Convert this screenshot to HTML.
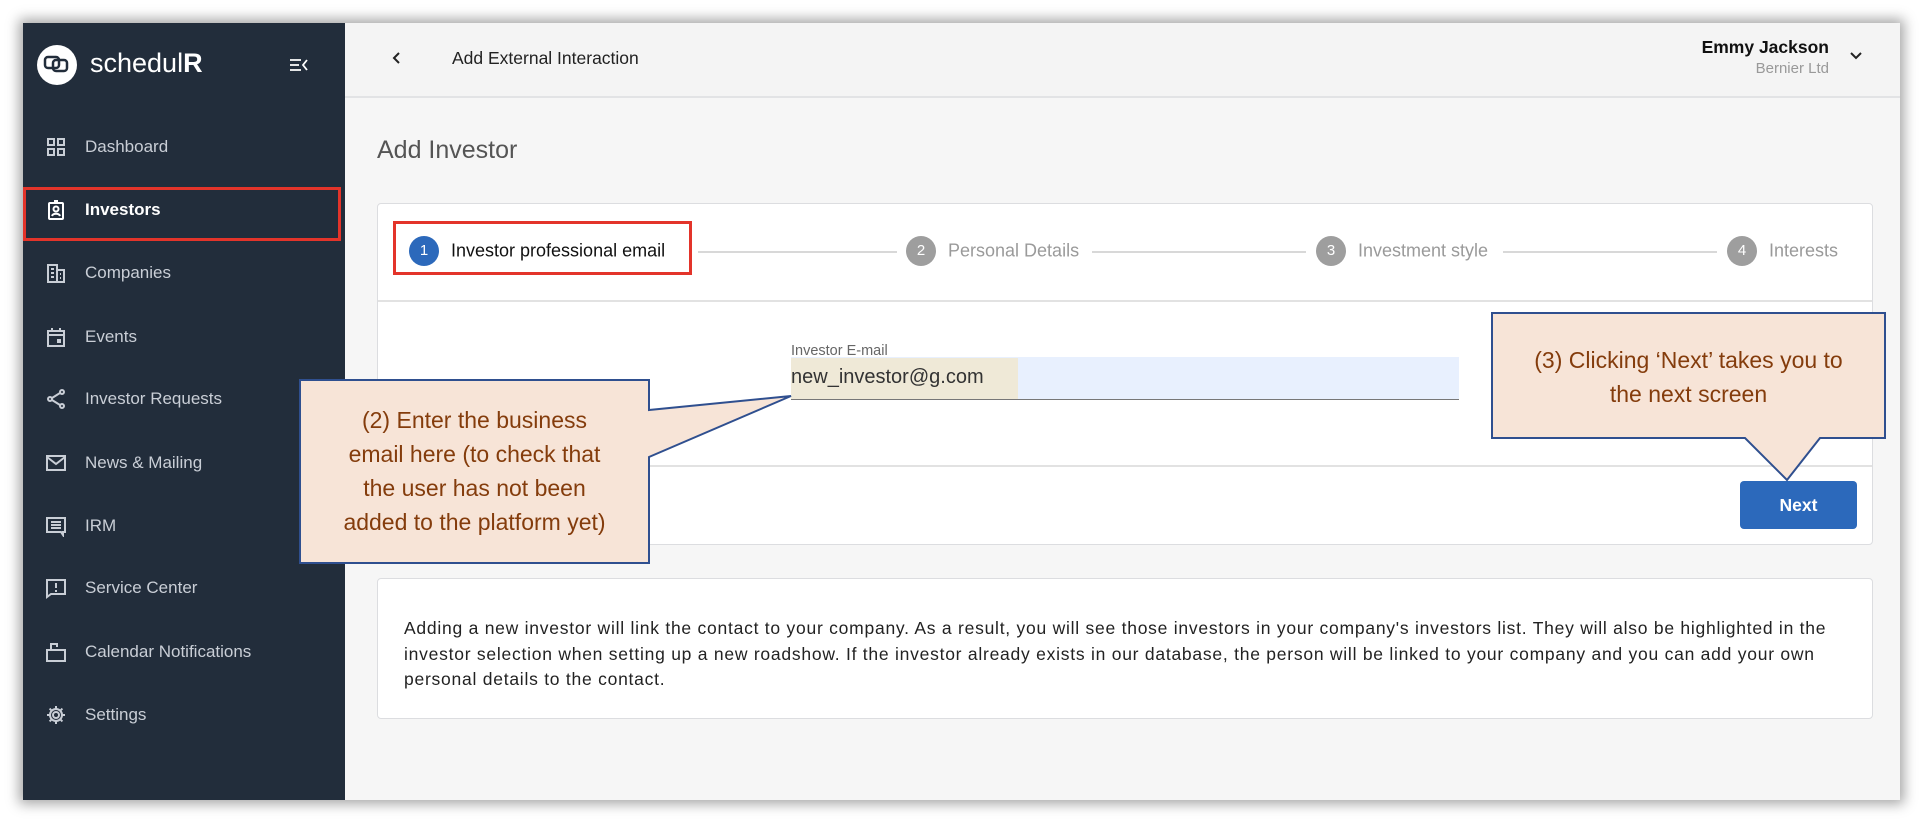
<!DOCTYPE html>
<html><head><meta charset="utf-8"><style>
*{margin:0;padding:0;box-sizing:border-box}
body{width:1926px;height:828px;background:#fff;font-family:"Liberation Sans",sans-serif;position:relative;overflow:hidden}
.win{position:absolute;left:23px;top:23px;width:1877px;height:777px;background:#f6f6f6;box-shadow:0 0 12px 4px rgba(0,0,0,.35)}
.side{position:absolute;left:23px;top:23px;width:322px;height:777px;background:#222d3b}
.abs{position:absolute}
.mi{position:absolute;left:85px;font-size:17px;color:#c9ced6;transform:translateY(-50%)}
.ic{position:absolute;left:45px;width:22px;height:22px;transform:translateY(-50%)}
.hdr{position:absolute;left:345px;top:23px;width:1555px;height:75px;background:#f4f4f4;border-bottom:2px solid #e2e3e5}
.card{position:absolute;left:377px;width:1496px;background:#fff;border:1.5px solid #dcdde0;border-radius:4px}
.st{position:absolute;top:251px;transform:translateY(-50%);font-size:18px;color:#9a9a9a}
.cc{position:absolute;top:251px;width:30px;height:30px;margin:-15px 0 0 -15px;border-radius:50%;background:#9e9e9e;color:#fff;font-size:15px;text-align:center;line-height:30px}
.ln{position:absolute;top:251px;height:1.5px;background:#d8d8d8}
.co{position:absolute;color:#843c0c;font-size:23px;text-align:center;line-height:34px;font-family:"Liberation Sans",sans-serif}
</style></head><body>
<div class="win"></div>
<div class="side"></div>
<div class="abs" style="left:37px;top:45px;width:40px;height:40px;border-radius:50%;background:#fff"></div>
<svg class="abs" style="left:41px;top:51px" width="32" height="28" viewBox="0 0 32 28"><rect x="4" y="6" width="14" height="11" rx="3" fill="none" stroke="#222d3b" stroke-width="2.5"/><rect x="12" y="9" width="14" height="11" rx="3" fill="none" stroke="#222d3b" stroke-width="2.5"/></svg>
<div class="abs" style="left:90px;top:48px;font-size:27px;color:#fff">schedul<b>R</b></div>
<svg class="abs" style="left:289px;top:57px" width="20" height="16" viewBox="0 0 20 16"><path d="M1 3h11M1 8h9M1 13h11M18 3l-4 5 4 5" stroke="#fff" stroke-width="1.8" fill="none"/></svg>
<svg class="ic" style="top:147px" viewBox="0 0 22 22"><g fill="none" stroke="#c9ced6" stroke-width="2"><rect x="3" y="3" width="6" height="6"/><rect x="13" y="3" width="6" height="6"/><rect x="3" y="13" width="6" height="6"/><rect x="13" y="13" width="6" height="6"/></g></svg>
<div class="mi" style="top:147px">Dashboard</div>
<div class="abs" style="left:23px;top:187px;width:318px;height:54px;border:3px solid #e3342a"></div>
<svg class="ic" style="top:210px" viewBox="0 0 22 22"><g fill="none" stroke="#fff" stroke-width="2"><rect x="4" y="4" width="14" height="16" rx="1"/><circle cx="11" cy="10" r="2.5"/><path d="M7 17c1-3 7-3 8 0M9 2h4"/></g></svg>
<div class="mi" style="top:210px;color:#fff;font-weight:bold">Investors</div>
<svg class="ic" style="top:273px" viewBox="0 0 22 22"><g fill="none" stroke="#c9ced6" stroke-width="2"><path d="M3 20V3h9v17M12 8h7v12H2"/><path d="M6 7h3M6 11h3M6 15h3M15 12h1M15 16h1" /></g></svg>
<div class="mi" style="top:273px">Companies</div>
<svg class="ic" style="top:337px" viewBox="0 0 22 22"><g fill="none" stroke="#c9ced6" stroke-width="2"><rect x="3" y="5" width="16" height="15"/><path d="M3 9h16M7 2v4M15 2v4"/></g><rect x="12" y="13" width="4" height="4" fill="#c9ced6"/></svg>
<div class="mi" style="top:337px">Events</div>
<svg class="ic" style="top:399px" viewBox="0 0 22 22"><g fill="none" stroke="#c9ced6" stroke-width="2"><circle cx="17" cy="4" r="2"/><circle cx="5" cy="11" r="2"/><circle cx="17" cy="18" r="2"/><path d="M7 10l8-5M7 12l8 5"/></g></svg>
<div class="mi" style="top:399px">Investor Requests</div>
<svg class="ic" style="top:463px" viewBox="0 0 22 22"><g fill="none" stroke="#c9ced6" stroke-width="2"><rect x="2" y="4" width="18" height="14"/><path d="M2 5l9 7 9-7"/></g></svg>
<div class="mi" style="top:463px">News &amp; Mailing</div>
<svg class="ic" style="top:526px" viewBox="0 0 22 22"><g fill="none" stroke="#c9ced6" stroke-width="2"><path d="M2 3h18v14h-2v3l-2-3H2z"/><path d="M6 7h10M6 10h10M6 13h10"/></g></svg>
<div class="mi" style="top:526px">IRM</div>
<svg class="ic" style="top:588px" viewBox="0 0 22 22"><g fill="none" stroke="#c9ced6" stroke-width="2"><path d="M2 3h18v14H6l-4 3z"/><path d="M11 6v5M11 13v2"/></g></svg>
<div class="mi" style="top:588px">Service Center</div>
<svg class="ic" style="top:652px" viewBox="0 0 22 22"><g fill="none" stroke="#c9ced6" stroke-width="2"><path d="M2 9h18v11H2zM6 9V3h6v3"/></g></svg>
<div class="mi" style="top:652px">Calendar Notifications</div>
<svg class="ic" style="top:715px" viewBox="0 0 22 22"><g fill="none" stroke="#c9ced6" stroke-width="2"><circle cx="11" cy="11" r="3"/><path d="M11 2v3M11 17v3M2 11h3M17 11h3M4.6 4.6l2.1 2.1M15.3 15.3l2.1 2.1M4.6 17.4l2.1-2.1M15.3 6.7l2.1-2.1"/><circle cx="11" cy="11" r="6"/></g></svg>
<div class="mi" style="top:715px">Settings</div>
<div class="hdr"></div>
<svg class="abs" style="left:391px;top:51px" width="12" height="14" viewBox="0 0 12 14"><path d="M8 2L3 7l5 5" stroke="#222" stroke-width="2" fill="none"/></svg>
<div class="abs" style="left:452px;top:48px;font-size:17.5px;color:#222">Add External Interaction</div>
<div class="abs" style="right:97px;top:37px;font-size:17.5px;color:#111;font-weight:bold;text-align:right">Emmy Jackson</div>
<div class="abs" style="right:97px;top:60px;font-size:15px;color:#999;text-align:right">Bernier Ltd</div>
<svg class="abs" style="left:1849px;top:51px" width="14" height="10" viewBox="0 0 14 10"><path d="M2 2l5 5 5-5" stroke="#222" stroke-width="2" fill="none"/></svg>
<div class="abs" style="left:377px;top:136px;font-size:25px;color:#555">Add Investor</div>
<div class="card" style="top:203px;height:342px"></div>
<div class="abs" style="left:378px;top:300px;width:1494px;height:1.5px;background:#e2e2e2"></div>
<div class="abs" style="left:378px;top:465px;width:1494px;height:1.5px;background:#e2e2e2"></div>
<div class="abs" style="left:393px;top:221px;width:299px;height:54px;border:3px solid #e3342a"></div>
<div class="cc" style="left:424px;background:#2c69bb">1</div>
<div class="st" style="left:451px;color:#111">Investor professional email</div>
<div class="ln" style="left:698px;width:199px"></div>
<div class="cc" style="left:921px">2</div>
<div class="st" style="left:948px">Personal Details</div>
<div class="ln" style="left:1092px;width:214px"></div>
<div class="cc" style="left:1331px">3</div>
<div class="st" style="left:1358px">Investment style</div>
<div class="ln" style="left:1503px;width:214px"></div>
<div class="cc" style="left:1742px">4</div>
<div class="st" style="left:1769px">Interests</div>
<div class="abs" style="left:791px;top:343px;font-size:14.5px;color:#666">Investor E-mail</div>
<div class="abs" style="left:791px;top:357px;width:668px;height:43px;background:#e8f0fe;border-bottom:1.5px solid #777"></div>
<div class="abs" style="left:791px;top:358px;width:227px;height:41px;background:#efe9d7"></div>
<div class="abs" style="left:791px;top:366px;font-size:20px;color:#333">new_investor@g.com</div>
<div class="abs" style="left:1740px;top:481px;width:117px;height:48px;background:#2c69bb;border-radius:4px;color:#fff;font-weight:bold;font-size:17.5px;text-align:center;line-height:48px">Next</div>
<div class="card" style="top:578px;height:141px"></div>
<div class="abs" style="left:404px;top:616px;white-space:nowrap;font-size:17.5px;letter-spacing:0.75px;line-height:25.5px;color:#222">Adding a new investor will link the contact to your company. As a result, you will see those investors in your company's investors list. They will also be highlighted in the<br>investor selection when setting up a new roadshow. If the investor already exists in our database, the person will be linked to your company and you can add your own<br>personal details to the contact.</div>
<svg class="abs" style="left:0;top:0" width="1926" height="828">
<polygon points="300,380 649,380 649,410 791,396 649,457 649,563 300,563" fill="#f7e4d7" stroke="#2f4f8f" stroke-width="2"/>
<polygon points="1492,313 1885,313 1885,438 1820,438 1787,480 1745,438 1492,438" fill="#f7e4d7" stroke="#2f4f8f" stroke-width="2"/>
</svg>
<div class="co" style="left:300px;top:403px;width:349px">(2) Enter the business<br>email here (to check that<br>the user has not been<br>added to the platform yet)</div>
<div class="co" style="left:1492px;top:343px;width:393px">(3) Clicking ‘Next’ takes you to<br>the next screen</div>
</body></html>
